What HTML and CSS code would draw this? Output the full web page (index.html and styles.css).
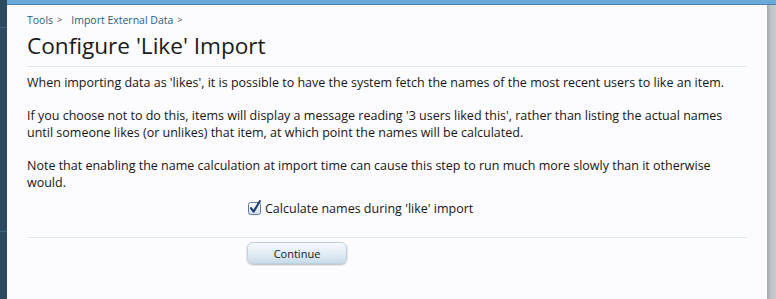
FILE: index.html
```html
<!DOCTYPE html>
<html>
<head>
<meta charset="utf-8">
<link rel="stylesheet" href="styles.css">
</head>
<body>
<div class="frame">
  <div class="sidebar"><div class="sb-line sb-line-top"></div><div class="sb-line sb-line-bottom"></div></div>
  <div class="topbar"></div>
  <main class="content">
    <nav class="breadcrumb">
      <a class="crumb" href="#">Tools</a><span class="sep">&gt;</span>
      <a class="crumb" href="#">Import External Data</a><span class="sep">&gt;</span>
    </nav>
    <h1 class="title">Configure 'Like' Import</h1>
    <div class="explain">
      <p>When importing data as 'likes', it is possible to have the system fetch the names of the most recent users to like an item.</p>
      <p>If you choose not to do this, items will display a message reading '3 users liked this', rather than listing the actual names until someone likes (or unlikes) that item, at which point the names will be calculated.</p>
      <p>Note that enabling the name calculation at import time can cause this step to run much more slowly than it otherwise would.</p>
    </div>
    <form class="form">
      <div class="ctrl-unit">
        <div class="ctrl-label"></div>
        <label class="check">
          <svg class="check-box" width="14" height="15" viewBox="0 0 14 15" aria-hidden="true">
            <defs>
              <linearGradient id="cbg" x1="0" y1="0" x2="0" y2="1">
                <stop offset="0" stop-color="#ffffff"/>
                <stop offset="1" stop-color="#cfdbe9"/>
              </linearGradient>
            </defs>
            <rect x="0.5" y="2.5" width="12" height="12" rx="2" fill="url(#cbg)" stroke="#5d7ea9"/>
            <path d="M3 8.2 L5.6 11.6 L11.8 1.2" fill="none" stroke="#1e3d70" stroke-width="2.1" stroke-linecap="round" stroke-linejoin="round"/>
          </svg>
          <span class="check-text">Calculate names during 'like' import</span>
        </label>
      </div>
      <div class="submit-unit">
        <div class="ctrl-label"></div>
        <div><button type="button" class="button">Continue</button></div>
      </div>
    </form>
  </main>
  <div class="shadow"></div>
</div>
</body>
</html>
```

FILE: styles.css
```css
html, body {
  margin: 0;
  padding: 0;
  height: 100%;
}

body {
  font-family: "Open Sans", "Liberation Sans", sans-serif;
  color: #161616;
  background: #fcfcfe;
  overflow: hidden;
}

.frame {
  display: grid;
  grid-template-columns: 7px 1fr 9px;
  grid-template-rows: 5px 1fr;
  height: 100vh;
}

.sidebar {
  grid-column: 1;
  grid-row: 1 / 3;
  background: #2c4a5f;
  display: flex;
  flex-direction: column;
}

.sb-line {
  height: 1px;
  background: #3f6780;
}

.sb-line-top {
  margin-top: 27px;
}

.sb-line-bottom {
  margin-top: 203px;
}

.topbar {
  grid-column: 2 / 4;
  grid-row: 1;
  background: #6aaad9;
  border-bottom: 1px solid #4f83ad;
}

.shadow {
  grid-column: 3;
  grid-row: 2;
  background: linear-gradient(to right, #a3abb0, #bcc2c6 40%, #c9cdd0);
}

.content {
  grid-column: 2;
  grid-row: 2;
  background: #fcfcfe;
  padding: 8px 20px 0 20px;
}

.breadcrumb {
  font-size: 10.5px;
  line-height: 14px;
  display: flex;
  align-items: center;
}

.crumb {
  color: #2a5d84;
  text-decoration: none;
}

.sep {
  font-size: 9px;
  color: #444;
  margin: 0 9px 0 4px;
}

.title {
  margin: 5px 0 0 0;
  font-size: 22.6px;
  line-height: 28px;
  font-weight: normal;
  color: #1a1a1a;
  padding-bottom: 6px;
  border-bottom: 1px solid #dfe8ee;
}

.explain {
  margin-top: 7px;
  font-size: 12.5px;
  line-height: 17px;
}

.explain p {
  margin: 0 0 16px 0;
}

.explain p:last-child {
  margin-bottom: 0;
}

.form {
  margin-top: 9px;
}

.ctrl-unit,
.submit-unit {
  display: grid;
  grid-template-columns: 220px 1fr;
}

.check {
  display: flex;
  align-items: center;
  font-size: 12.5px;
  line-height: 18px;
  color: #161616;
}

.check-box {
  margin-left: 1px;
  margin-right: 3px;
  margin-top: -3px;
}

.submit-unit {
  margin-top: 19px;
  border-top: 1px solid #e0e9ee;
  padding-top: 4px;
}

.button {
  width: 100px;
  height: 22px;
  border: 1px solid #bfd1df;
  border-radius: 6px;
  background: linear-gradient(to bottom, #f6f9fc, #e3edf5 50%, #c9dbe9);
  box-shadow: 0 1px 2px rgba(0, 0, 0, 0.28);
  font-family: "Open Sans", "Liberation Sans", sans-serif;
  font-size: 11px;
  color: #1a1a1a;
  padding: 0;
  display: flex;
  align-items: center;
  justify-content: center;
}
```
